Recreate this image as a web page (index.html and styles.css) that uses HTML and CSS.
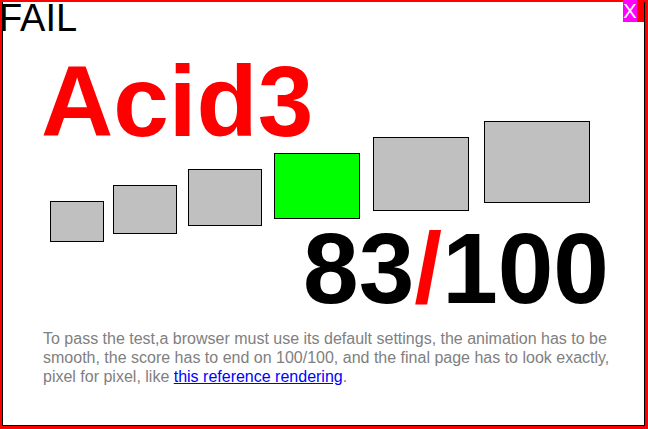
FILE: index.html
```html
<!DOCTYPE html>
<html>
<head>
<meta charset="utf-8">
<title>Acid3</title>
<link rel="stylesheet" href="styles.css">
</head>
<body>
<div class="frame">
  <p class="status">FAIL</p>
  <h1 class="title">Acid3</h1>
  <div class="buckets">
    <span class="bucket b1"></span>
    <span class="bucket b2"></span>
    <span class="bucket b3"></span>
    <span class="bucket b4 pass"></span>
    <span class="bucket b5"></span>
    <span class="bucket b6"></span>
  </div>
  <p class="score">83<span class="slash">/</span>100</p>
  <p class="instructions">To pass the test,a browser must use its default settings, the animation has to be smooth, the score has to end on 100/100, and the final page has to look exactly, pixel for pixel, like <a href="#">this reference rendering</a>.</p>
</div>
<div class="close"><span class="close-x">X</span><span class="close-pad"></span></div>
</body>
</html>
```
FILE: styles.css
```css
html, body {
  margin: 0;
  padding: 0;
}
body {
  position: relative;
  width: 648px;
  height: 429px;
  overflow: hidden;
  background: #ff0000;
  font-family: "Liberation Sans", Arial, sans-serif;
}
.frame {
  margin: 2px 3px 0 2px;
  height: 423px;
  background: #ffffff;
  border: 1px solid #000000;
  border-top: none;
  overflow: hidden;
}
.status {
  margin: 0 0 0 -4px;
  font-size: 38px;
  line-height: 32px;
  color: #000000;
}
.title {
  margin: 17px 0 0 38px;
  font-size: 100px;
  line-height: 100px;
  font-weight: bold;
  color: #ff0000;
}
.buckets {
  display: flex;
  align-items: flex-start;
  margin-top: -30px;
  padding-left: 47px;
}
.bucket {
  box-sizing: border-box;
  flex: none;
  background: #c0c0c0;
  border: 1px solid #000000;
}
.bucket.pass { background: #00ff00; }
.b1 { width: 54px; height: 41px; margin-top: 80px; }
.b2 { width: 64px; height: 49px; margin-top: 64px; margin-left: 9px; }
.b3 { width: 74px; height: 57px; margin-top: 48px; margin-left: 11px; }
.b4 { width: 86px; height: 66px; margin-top: 32px; margin-left: 12px; }
.b5 { width: 96px; height: 74px; margin-top: 16px; margin-left: 13px; }
.b6 { width: 106px; height: 82px; margin-top: 0; margin-left: 15px; }
.score {
  margin: -24px 0 0 0;
  padding-right: 35px;
  text-align: right;
  font-size: 100px;
  line-height: 100px;
  font-weight: bold;
  color: #000000;
}
.slash { color: #ff0000; }
.instructions {
  margin: 11px 0 0 40px;
  width: 585px;
  font-family: "Liberation Sans", Arial, sans-serif;
  font-size: 16px;
  line-height: 19px;
  color: #808080;
}
.instructions a {
  color: #0000ff;
  text-decoration: underline;
}
.close {
  position: absolute;
  top: 0;
  right: 4px;
  display: flex;
  height: 22px;
}
.close-x {
  width: 14px;
  background: #ff00ff;
  color: #ffffff;
  font-size: 20px;
  line-height: 22px;
  text-align: center;
}
.close-pad {
  width: 7px;
  background: #ff0000;
}
```
